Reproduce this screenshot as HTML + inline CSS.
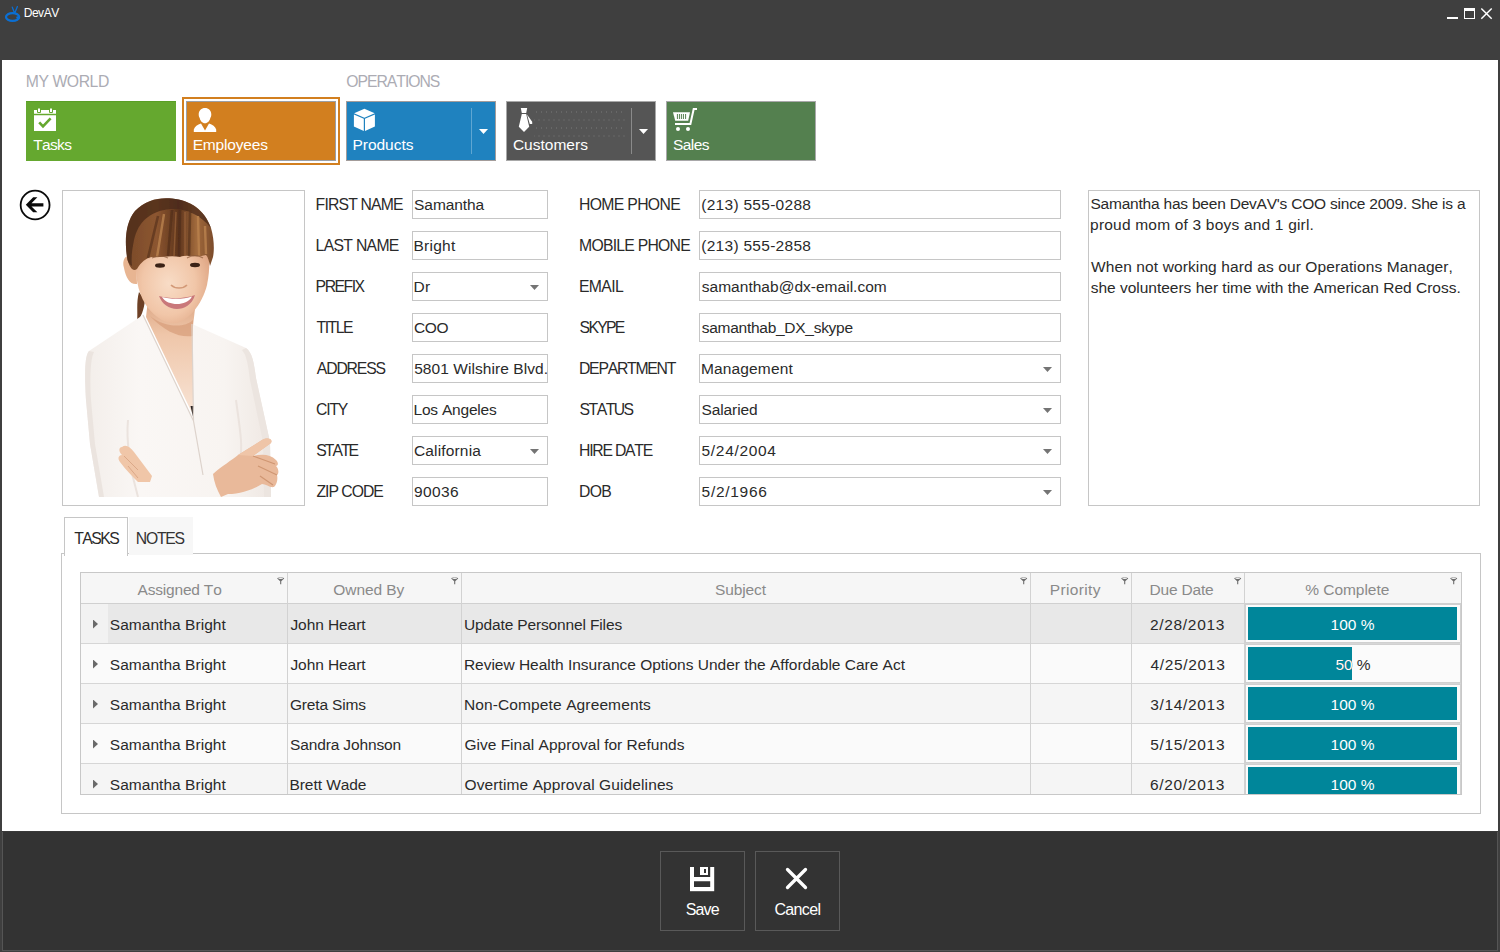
<!DOCTYPE html>
<html lang="en">
<head>
<meta charset="utf-8">
<title>DevAV</title>
<style>
*{box-sizing:border-box;margin:0;padding:0}
html,body{width:1500px;height:952px;overflow:hidden;background:#3f3f3f}
body{position:relative;font-family:"Liberation Sans",sans-serif;font-size:15.5px;color:#2a2a2a;font-kerning:none}
.a{position:absolute}
.t{position:absolute;white-space:nowrap;line-height:20px;height:20px}
#content{left:2px;top:60px;width:1496px;height:771px;background:#fff}
#bt{left:2px;top:831px;width:1496px;height:1px;background:#393939}
#bottom{left:2px;top:832px;width:1496px;height:119px;background:#333;border:1px solid #555;border-top:none}
.tile{position:absolute;top:101px;width:150px;height:60px}
.tile svg{position:absolute}
.box{position:absolute;height:29px;border:1px solid #c6c6c6;background:#fff}
.dd{position:absolute;width:9px;height:5px;background:#747474;clip-path:polygon(0 0,100% 0,50% 100%)}
.ddw{position:absolute;width:9px;height:5px;background:#fff;clip-path:polygon(0 0,100% 0,50% 100%)}
.ex{position:absolute;width:5px;height:9px;background:#6a6a6a;clip-path:polygon(0 0,100% 50%,0 100%)}
.vl{position:absolute;top:573px;width:1px;height:221px;background:#d2d2d2}
</style>
</head>
<body>
<div class="a" id="content"></div>
<div class="a" id="bottom"></div><div class="a" id="bt"></div>
<div class="t" style="left:23.72px;top:2.9px;letter-spacing:-0.470px;font-size:12px;color:#fff">DevAV</div>
<svg class="a" style="left:4px;top:4px" width="18" height="20" viewBox="0 0 18 20"><g fill="none" stroke="#0b6fd3" stroke-linecap="round"><ellipse cx="8.6" cy="13" rx="6.6" ry="3.9" stroke-width="2.3"/><path d="M8.3 3.2 10.3 8.4M13.4 2.6 11 8.6" stroke-width="1.3"/></g><circle cx="13.6" cy="13.6" r="1.3" fill="#0b6fd3"/></svg>
<div class="a" style="left:1447px;top:16.500px;width:11px;height:2.500px;background:#fff"></div>
<div class="a" style="left:1464px;top:8px;width:11px;height:11px;border:1px solid #fff;border-top-width:3px"></div>
<svg class="a" style="left:1480px;top:7px" width="13" height="13" viewBox="0 0 13 13"><path d="M1.3 1.5 11.7 11.7M11.7 1.5 1.3 11.7" stroke="#fff" stroke-width="1.5" fill="none"/></svg>
<div class="t" style="left:25.81px;top:71.5px;letter-spacing:-0.453px;font-size:15.75px;color:#acacb4">MY WORLD</div>
<div class="t" style="left:346.35px;top:71.5px;letter-spacing:-1.027px;font-size:15.75px;color:#acacb4">OPERATIONS</div>
<div class="tile" style="left:26px;background:#65a82f;border-top:1px solid #5a9f26">
<svg width="24" height="26" viewBox="0 0 24 26" style="left:8px;top:5px"><path fill="#fff" d="M0 3h22v3.8H0zM0 8.2h22V24H0z"/><path fill="#fff" stroke="#65a82f" stroke-width="1" d="M3.5 1h3v4.500h-3zM15.5 1h3v4.500h-3z"/><path d="M5.2 15.4 9 19.4 16.6 11.4" fill="none" stroke="#65a82f" stroke-width="2.600"/></svg></div>
<div class="t" style="left:33.25px;top:134.6px;letter-spacing:-0.668px;color:#fff">Tasks</div>
<div class="a" style="left:182px;top:97px;width:158px;height:68px;border:2px solid #d27f1f;background:#fff"></div>
<div class="tile" style="left:186px;background:#d27f1f;border:1px solid #9c9fa4">
<svg width="24" height="26" viewBox="0 0 24 26" style="left:6px;top:5px"><path fill="#fff" d="M12 1c3.6 0 6.3 2.6 6.3 6.4 0 1.500-.4 2.700-1 3.500-.5 2.700-2.600 5.300-5.300 5.300s-4.800-2.600-5.300-5.300c-.6-.8-1-2-1-3.500C5.700 3.600 8.400 1 12 1z"/><path fill="#fff" d="M8 16.600 12 23.600 16 16.600C19.500 17.600 22.300 19.600 23.200 22.500V25H.8v-2.500C1.700 19.600 4.500 17.600 8 16.600z"/></svg></div>
<div class="t" style="left:192.73px;top:134.6px;letter-spacing:-0.186px;color:#fff">Employees</div>
<div class="tile" style="left:346px;background:#1f82bf;border:1px solid #a39c9a">
<svg width="24" height="26" viewBox="0 0 24 26" style="left:6px;top:5px"><path fill="#fff" d="M11.400 1.700 21.700 6.300 11.400 10.700 1.100 6.300zM.9 7.600 10.800 11.800V24L.9 19.600zM21.900 7.600 12 11.800V24l9.900-4.400z"/></svg>
<div class="a" style="left:124px;top:6px;width:1px;height:46px;background:#5fa6d2"></div><i class="ddw" style="left:132px;top:27px"></i></div>
<div class="t" style="left:352.43px;top:134.6px;letter-spacing:-0.021px;color:#fff">Products</div>
<div class="tile" style="left:506px;background:#555;border:1px solid #a8a8a8"><div class="a" style="left:27px;top:7px;width:92px;height:34px;background-image:radial-gradient(circle,#676767 0.5px,transparent 0.8px),radial-gradient(circle,#676767 0.5px,transparent 0.8px);background-size:5px 16px,5px 16px;background-position:0 -5px,2.5px 3px"></div>
<svg width="24" height="26" viewBox="0 0 24 26" style="left:6px;top:5px"><path fill="#fff" d="M7.800 1h6.400L13.200 6H8.800zM8.800 7h4.400L16.200 19.800 11 25 5.800 19.800zM14 7.400 19.200 14.800V17H16.800z"/></svg>
<div class="a" style="left:124px;top:6px;width:1px;height:46px;background:#8a8a8a"></div><i class="ddw" style="left:132px;top:27px"></i></div>
<div class="t" style="left:512.91px;top:134.6px;letter-spacing:0.007px;color:#fff">Customers</div>
<div class="tile" style="left:666px;background:#54804f;border:1px solid #a9a8aa">
<svg width="26" height="26" viewBox="0 0 26 26" style="left:6px;top:5px"><path fill="#fff" d="M0 5.200h17L15.200 13.800H2.200z"/><path d="M4.400 7v5M6.400 7v5M8.400 7v5M10.400 7v5M12.600 7v5" stroke="#54804f" stroke-width="1"/><path d="M24 2H20.700L17.400 17H2" fill="none" stroke="#fff" stroke-width="2"/><circle cx="5" cy="22" r="2" fill="#fff"/><circle cx="15" cy="22" r="2" fill="#fff"/></svg></div>
<div class="t" style="left:673.00px;top:134.6px;letter-spacing:-0.555px;color:#fff">Sales</div>
<svg class="a" style="left:19px;top:189px" width="33" height="33" viewBox="0 0 33 33"><circle cx="16.100" cy="16" r="14.450" fill="none" stroke="#0a0a0a" stroke-width="1.800"/><path d="M6.800 15.850 14.200 8.300H18.400L12.500 14.300H24.400V17.400H12.500L18.400 23.300H14.200z" fill="#0a0a0a"/></svg>
<div class="a" id="photo" style="left:62px;top:190px;width:243px;height:316px;border:1px solid #c6c6c6;background:#fff">
<svg class="a" style="left:0;top:0" width="241" height="314" viewBox="63 191 241 314">
<defs>
<linearGradient id="hg" x1="0" y1="0" x2="1" y2="0"><stop offset="0" stop-color="#7a4a2a"/><stop offset=".35" stop-color="#8c5630"/><stop offset=".6" stop-color="#5e351d"/><stop offset=".8" stop-color="#a16a3c"/><stop offset="1" stop-color="#7b4b2b"/></linearGradient>
<linearGradient id="sk" x1="0" y1="0" x2="1" y2="0"><stop offset="0" stop-color="#f0c4a4"/><stop offset=".55" stop-color="#f4cdb0"/><stop offset="1" stop-color="#e2a986"/></linearGradient>
<linearGradient id="jk" x1="0" y1="0" x2="1" y2="0"><stop offset="0" stop-color="#f3eeea"/><stop offset=".3" stop-color="#faf7f5"/><stop offset=".75" stop-color="#f8f4f1"/><stop offset="1" stop-color="#efe8e3"/></linearGradient>
<linearGradient id="ch" x1="0" y1="0" x2="0" y2="1"><stop offset="0" stop-color="#dca684"/><stop offset=".3" stop-color="#efc6a9"/><stop offset="1" stop-color="#f8e4d6"/></linearGradient><radialGradient id="fc" cx=".45" cy=".55" r=".6"><stop offset="0" stop-color="#f8dcc6"/><stop offset=".6" stop-color="#f1c6a8"/><stop offset="1" stop-color="#dfa684"/></radialGradient>
<filter id="bl" x="-5%" y="-5%" width="110%" height="110%"><feGaussianBlur stdDeviation=".7"/></filter>
</defs>
<g filter="url(#bl)">
<!-- ponytail -->
<path d="M139 292C136 303 138 312 137 322 141 317 144 310 145 300z" fill="#6d4125"/>
<!-- jacket -->
<path d="M143 315 89 351C84 356 85 380 86 400L90 444 99 497H271L270 442 256 378C254 362 252 352 246 348L192 324 193 421z" fill="url(#jk)"/>
<path d="M89 351C84 356 85 380 86 400L90 444 99 497H104L95 444 91 400C90 380 90 360 94 352z" fill="#ebe4df"/>
<path d="M246 348C252 352 254 362 256 378L270 442 271 497H264L263 442 250 380C248 365 247 356 242 350z" fill="#ece5e0"/>
<path d="M128 420C126 440 130 470 138 497M236 400C240 430 243 445 240 460" stroke="#ebe3de" stroke-width="2" fill="none"/>
<!-- neck & chest -->
<path d="M148 300 146 317 193 415 193 326 196 300z" fill="url(#ch)"/>
<path d="M150 316C165 328 185 328 193 320L193 336C180 338 165 332 150 316z" fill="#d89f7c" opacity=".75"/>
<path d="M190.500 406h3.500v15z" fill="#2a2422"/>
<!-- lapel lines -->
<path d="M143 315 193.500 421 203 475M192 324 193.500 421" stroke="#ddd3cc" stroke-width="1.200" fill="none"/>
<!-- ear -->
<path d="M136 257C128 252 121 258 124 268 126 278 130 285 137 284z" fill="#e8b592"/>
<!-- face -->
<path d="M136 250C134 275 138 295 148 308 158 320 168 324 176 323 188 321 202 305 207 285 210 270 210 255 208 245L170 235z" fill="url(#fc)"/>
<!-- hair -->
<path d="M127.500 260C124 240 126 222 135 211 145 200 160 197 172 198.500 190 200 205 210 211 228 214 238 214.500 250 213 257L210 266C209 261 208 257 206 255 196 258 188 254 180 257 170 255 160 258 152 257 146 258 141 262 137 269 133 272 130 268 127.500 260z" fill="url(#hg)"/>
<path d="M127.500 260C124 240 126 222 135 211 145 200 160 197 172 198.500 190 200 205 210 211 228 200 214 185 208 170 209 150 211 138 222 134 240 132 250 131 258 132 266 130 265 128.500 263 127.500 260z" fill="#4a2a19" opacity=".75"/>
<path d="M172 210 168 256M180 210 179 256M158 216 148 258M190 212 189 256" stroke="#4a2917" stroke-width="2.600" opacity=".55" fill="none"/>
<path d="M198 216 199 256M205 226 206 254M164 214 157 257" stroke="#bd8650" stroke-width="2.400" opacity=".75" fill="none"/>
<path d="M176 212 174 256M185 212 185 256" stroke="#9a6438" stroke-width="1.500" opacity=".7" fill="none"/>
<!-- eyes, brows -->
<ellipse cx="160" cy="265.500" rx="5" ry="2.200" fill="#3a2418"/>
<ellipse cx="195" cy="265" rx="5" ry="2.200" fill="#3a2418"/>
<path d="M152 258C158 255 164 256 168 258M187 258C192 255 198 255 203 258" stroke="#8a5a3a" stroke-width="1.200" fill="none" opacity=".7"/>
<!-- nose -->
<path d="M171 285C175 289 183 289 187 285" stroke="#d39a78" stroke-width="1.600" fill="none"/>
<!-- mouth -->
<path d="M159 296C170 299 184 299 195 295 192 305 184 309 177 309 169 309 162 304 159 296z" fill="#c9787a"/>
<path d="M162 297C170 299.500 184 299.500 192 296.500 189 302 183 304 177 304 171 304 165 302 162 297z" fill="#fff"/>
<!-- hands -->
<path d="M213 474C222 466 232 460 238 455L262 440C268 437 273 439 271 443L253 456C262 454 270 454 276 460 279 463 278 466 276 466 279 469 279 474 277 475 278 479 277 484 274 487 270 488 266 484 262 484 252 490 240 494 228 494L221 497C217 490 214 482 213 474z" fill="#e9b99a"/>
<path d="M253 456 275 464M258 466 277 475M260 476 273 485" stroke="#cf9672" stroke-width="1.200" fill="none"/>
<path d="M238 455 262 440C268 437 273 439 271 443L253 456z" fill="#efc5a8"/>
<path d="M122 447C126 444 130 447 134 452L152 476 150 482 138 482C132 476 126 470 120 462 117 458 119 455 122 455 118 451 119 447 122 447z" fill="#f0c6a8"/>
<path d="M124 456 138 470M128 466 138 478" stroke="#dba888" stroke-width="1" fill="none"/>
</g>
<rect x="63" y="497.500" width="241" height="8" fill="#fff"/>
</svg>

</div>
<div class="t" style="left:315.61px;top:194.5px;letter-spacing:-0.838px;font-size:15.75px">FIRST NAME</div>
<div class="box" style="left:412px;top:190px;width:136px"></div>
<div class="t" style="left:414.10px;top:194.6px;letter-spacing:-0.082px">Samantha</div>
<div class="t" style="left:579.01px;top:194.5px;letter-spacing:-0.664px;font-size:15.75px">HOME PHONE</div>
<div class="box" style="left:699px;top:190px;width:362px"></div>
<div class="t" style="left:701.24px;top:194.6px;letter-spacing:0.286px">(213) 555-0288</div>
<div class="t" style="left:315.61px;top:235.5px;letter-spacing:-0.697px;font-size:15.75px">LAST NAME</div>
<div class="box" style="left:412px;top:231px;width:136px"></div>
<div class="t" style="left:413.53px;top:235.6px;letter-spacing:0.252px">Bright</div>
<div class="t" style="left:579.01px;top:235.5px;letter-spacing:-0.742px;font-size:15.75px">MOBILE PHONE</div>
<div class="box" style="left:699px;top:231px;width:362px"></div>
<div class="t" style="left:701.24px;top:235.6px;letter-spacing:0.286px">(213) 555-2858</div>
<div class="t" style="left:315.61px;top:276.5px;letter-spacing:-1.481px;font-size:15.75px">PREFIX</div>
<div class="box" style="left:412px;top:272px;width:136px"></div>
<div class="t" style="left:413.53px;top:276.6px;letter-spacing:0.322px">Dr</div>
<i class="dd" style="left:530px;top:285px"></i>
<div class="t" style="left:579.01px;top:276.5px;letter-spacing:-0.653px;font-size:15.75px">EMAIL</div>
<div class="box" style="left:699px;top:272px;width:362px"></div>
<div class="t" style="left:701.77px;top:276.6px;letter-spacing:0.019px">samanthab@dx-email.com</div>
<div class="t" style="left:316.55px;top:317.5px;letter-spacing:-1.476px;font-size:15.75px">TITLE</div>
<div class="box" style="left:412px;top:313px;width:136px"></div>
<div class="t" style="left:414.01px;top:317.6px;letter-spacing:-0.435px">COO</div>
<div class="t" style="left:579.58px;top:317.5px;letter-spacing:-1.705px;font-size:15.75px">SKYPE</div>
<div class="box" style="left:699px;top:313px;width:362px"></div>
<div class="t" style="left:701.77px;top:317.6px;letter-spacing:-0.275px">samanthab_DX_skype</div>
<div class="t" style="left:316.87px;top:358.5px;letter-spacing:-1.163px;font-size:15.75px">ADDRESS</div>
<div class="box" style="left:412px;top:354px;width:136px"></div>
<div class="t" style="left:414.18px;top:358.6px;letter-spacing:0.070px;max-width:133px;overflow:hidden">5801 Wilshire Blvd.</div>
<div class="t" style="left:579.01px;top:358.5px;letter-spacing:-1.250px;font-size:15.75px">DEPARTMENT</div>
<div class="box" style="left:699px;top:354px;width:362px"></div>
<div class="t" style="left:700.93px;top:358.6px;letter-spacing:0.153px">Management</div>
<i class="dd" style="left:1043px;top:367px"></i>
<div class="t" style="left:316.10px;top:399.5px;letter-spacing:-1.219px;font-size:15.75px">CITY</div>
<div class="box" style="left:412px;top:395px;width:136px"></div>
<div class="t" style="left:413.53px;top:399.6px;letter-spacing:-0.210px">Los Angeles</div>
<div class="t" style="left:579.58px;top:399.5px;letter-spacing:-1.522px;font-size:15.75px">STATUS</div>
<div class="box" style="left:699px;top:395px;width:362px"></div>
<div class="t" style="left:701.50px;top:399.6px;letter-spacing:-0.109px">Salaried</div>
<i class="dd" style="left:1043px;top:408px"></i>
<div class="t" style="left:316.18px;top:440.5px;letter-spacing:-1.951px;font-size:15.75px">STATE</div>
<div class="box" style="left:412px;top:436px;width:136px"></div>
<div class="t" style="left:414.01px;top:440.6px;letter-spacing:0.153px">California</div>
<i class="dd" style="left:530px;top:449px"></i>
<div class="t" style="left:579.01px;top:440.5px;letter-spacing:-1.223px;font-size:15.75px">HIRE DATE</div>
<div class="box" style="left:699px;top:436px;width:362px"></div>
<div class="t" style="left:701.58px;top:440.6px;letter-spacing:0.672px">5/24/2004</div>
<i class="dd" style="left:1043px;top:449px"></i>
<div class="t" style="left:316.40px;top:481.5px;letter-spacing:-0.985px;font-size:15.75px">ZIP CODE</div>
<div class="box" style="left:412px;top:477px;width:136px"></div>
<div class="t" style="left:414.07px;top:481.6px;letter-spacing:0.380px">90036</div>
<div class="t" style="left:579.01px;top:481.5px;letter-spacing:-0.710px;font-size:15.75px">DOB</div>
<div class="box" style="left:699px;top:477px;width:362px"></div>
<div class="t" style="left:701.58px;top:481.6px;letter-spacing:0.708px">5/2/1966</div>
<i class="dd" style="left:1043px;top:490px"></i>
<div class="a" id="notes" style="left:1088px;top:190px;width:392px;height:316px;border:1px solid #c6c6c6;background:#fff"></div>
<div class="t" style="left:1090.40px;top:193.6px;letter-spacing:-0.210px">Samantha has been DevAV's COO since 2009. She is a</div>
<div class="t" style="left:1090.10px;top:214.6px;letter-spacing:0.194px">proud mom of 3 boys and 1 girl.</div>
<div class="t" style="left:1091.03px;top:256.6px;letter-spacing:0.111px">When not working hard as our Operations Manager,</div>
<div class="t" style="left:1090.67px;top:277.6px;letter-spacing:-0.008px">she volunteers her time with the American Red Cross.</div>
<div class="a" style="left:61px;top:553px;width:1420px;height:261px;border:1px solid #c6c6c6;background:#fff"></div>
<div class="a" style="left:129px;top:517px;width:64px;height:38px;background:#f7f7f7"></div>
<div class="a" style="left:64px;top:517px;width:64px;height:39px;border:1px solid #c6c6c6;border-bottom:none;background:#fff"></div>
<div class="t" style="left:74.25px;top:528.5px;letter-spacing:-1.528px;font-size:15.75px">TASKS</div>
<div class="t" style="left:135.81px;top:528.5px;letter-spacing:-1.251px;font-size:15.75px;color:#333">NOTES</div>
<div class="a" id="grid" style="left:80px;top:572px;width:1382px;height:223px;border:1px solid #c8c8c8;background:#fafafa"></div>
<div class="a" style="left:81px;top:573px;width:1380px;height:31px;background:#f6f6f6;border-bottom:1px solid #d0d0d0"></div>
<div class="a" style="left:81px;top:604px;width:1380px;height:190px;overflow:hidden">
<div class="a" style="left:0;top:0px;width:1380px;height:40px;background:#e8e8e8;border-bottom:1px solid #d6d6d6"></div>
<div class="a" style="left:0;top:0px;width:27px;height:39px;background:#f2f2f2"></div>
<i class="ex" style="left:12px;top:15.5px"></i>
<div class="a" style="left:1164px;top:0px;width:216px;height:39px;border:1px solid #d0d0d0;background:#fbfbfb"></div>
<div class="a" style="left:1167px;top:3px;width:209px;height:33px;background:#00869a"></div>
<div class="a" style="left:0;top:40px;width:1380px;height:40px;background:#fafafa;border-bottom:1px solid #d6d6d6"></div>
<i class="ex" style="left:12px;top:55.5px"></i>
<div class="a" style="left:1164px;top:40px;width:216px;height:39px;border:1px solid #d0d0d0;background:#fbfbfb"></div>
<div class="a" style="left:1167px;top:43px;width:104px;height:33px;background:#00869a"></div>
<div class="a" style="left:0;top:80px;width:1380px;height:40px;background:#f5f5f5;border-bottom:1px solid #d6d6d6"></div>
<i class="ex" style="left:12px;top:95.5px"></i>
<div class="a" style="left:1164px;top:80px;width:216px;height:39px;border:1px solid #d0d0d0;background:#fbfbfb"></div>
<div class="a" style="left:1167px;top:83px;width:209px;height:33px;background:#00869a"></div>
<div class="a" style="left:0;top:120px;width:1380px;height:40px;background:#fafafa;border-bottom:1px solid #d6d6d6"></div>
<i class="ex" style="left:12px;top:135.5px"></i>
<div class="a" style="left:1164px;top:120px;width:216px;height:39px;border:1px solid #d0d0d0;background:#fbfbfb"></div>
<div class="a" style="left:1167px;top:123px;width:209px;height:33px;background:#00869a"></div>
<div class="a" style="left:0;top:160px;width:1380px;height:40px;background:#f5f5f5;border-bottom:1px solid #d6d6d6"></div>
<i class="ex" style="left:12px;top:175.5px"></i>
<div class="a" style="left:1164px;top:160px;width:216px;height:39px;border:1px solid #d0d0d0;background:#fbfbfb"></div>
<div class="a" style="left:1167px;top:163px;width:209px;height:33px;background:#00869a"></div>
</div>
<div class="a" style="left:0;top:604px;width:1500px;height:190px;overflow:hidden">
<div class="t" style="left:109.80px;top:10.6px;letter-spacing:0.036px">Samantha Bright</div>
<div class="t" style="left:290.46px;top:10.6px;letter-spacing:-0.082px">John Heart</div>
<div class="t" style="left:464.00px;top:10.6px;letter-spacing:-0.142px">Update Personnel Files</div>
<div class="t" style="left:1150.02px;top:10.6px;letter-spacing:0.672px">2/28/2013</div>
<div class="t" style="left:1330.62px;top:10.6px;letter-spacing:0.010px;color:#fff">100 %</div>
<div class="t" style="left:109.80px;top:50.6px;letter-spacing:0.036px">Samantha Bright</div>
<div class="t" style="left:290.46px;top:50.6px;letter-spacing:-0.082px">John Heart</div>
<div class="t" style="left:463.93px;top:50.6px;letter-spacing:-0.016px">Review Health Insurance Options Under the Affordable Care Act</div>
<div class="t" style="left:1150.44px;top:50.6px;letter-spacing:0.672px">4/25/2013</div>
<div class="t" style="left:1335.48px;top:50.6px;letter-spacing:-0.082px">50 %</div>
<div class="a" style="left:1248px;top:40px;width:104px;height:40px;overflow:hidden"><div class="a" style="left:-1248px;top:-40px;width:1500px;height:200px"><div class="t" style="left:1335.48px;top:50.6px;letter-spacing:-0.082px;color:#fff">50 %</div></div></div>
<div class="t" style="left:109.80px;top:90.6px;letter-spacing:0.036px">Samantha Bright</div>
<div class="t" style="left:289.92px;top:90.6px;letter-spacing:-0.152px">Greta Sims</div>
<div class="t" style="left:463.93px;top:90.6px;letter-spacing:0.120px">Non-Compete Agreements</div>
<div class="t" style="left:1150.21px;top:90.6px;letter-spacing:0.672px">3/14/2013</div>
<div class="t" style="left:1330.62px;top:90.6px;letter-spacing:0.010px;color:#fff">100 %</div>
<div class="t" style="left:109.80px;top:130.6px;letter-spacing:0.036px">Samantha Bright</div>
<div class="t" style="left:290.00px;top:130.6px;letter-spacing:-0.135px">Sandra Johnson</div>
<div class="t" style="left:464.42px;top:130.6px;letter-spacing:0.010px">Give Final Approval for Refunds</div>
<div class="t" style="left:1150.18px;top:130.6px;letter-spacing:0.672px">5/15/2013</div>
<div class="t" style="left:1330.62px;top:130.6px;letter-spacing:0.010px;color:#fff">100 %</div>
<div class="t" style="left:109.80px;top:170.6px;letter-spacing:0.036px">Samantha Bright</div>
<div class="t" style="left:289.43px;top:170.6px;letter-spacing:-0.053px">Brett Wade</div>
<div class="t" style="left:464.47px;top:170.6px;letter-spacing:0.111px">Overtime Approval Guidelines</div>
<div class="t" style="left:1150.01px;top:170.6px;letter-spacing:0.672px">6/20/2013</div>
<div class="t" style="left:1330.62px;top:170.6px;letter-spacing:0.010px;color:#fff">100 %</div>
</div>
<div class="vl" style="left:287px"></div>
<div class="vl" style="left:461px"></div>
<div class="vl" style="left:1030px"></div>
<div class="vl" style="left:1131px"></div>
<div class="vl" style="left:1244px"></div>
<div class="t" style="left:137.57px;top:580.4px;letter-spacing:-0.196px;color:#8a8a8a">Assigned To</div>
<div class="t" style="left:333.27px;top:580.4px;letter-spacing:-0.063px;color:#8a8a8a">Owned By</div>
<div class="t" style="left:714.90px;top:580.4px;letter-spacing:-0.100px;color:#8a8a8a">Subject</div>
<div class="t" style="left:1049.83px;top:580.4px;letter-spacing:0.347px;color:#8a8a8a">Priority</div>
<div class="t" style="left:1149.53px;top:580.4px;letter-spacing:-0.185px;color:#8a8a8a">Due Date</div>
<div class="t" style="left:1305.25px;top:580.4px;letter-spacing:-0.043px;color:#8a8a8a">% Complete</div>
<svg class="a" style="left:277px;top:577px" width="8" height="8" viewBox="0 0 8 8"><path d="M.2 1.500C.2.100 7.200.100 7.200 1.500L4.250 4.300V7.200H3.150V4.300z" fill="#6e6e6e"/><ellipse cx="3.700" cy="1.350" rx="2.500" ry=".6" fill="#f6f6f6"/></svg>
<svg class="a" style="left:451px;top:577px" width="8" height="8" viewBox="0 0 8 8"><path d="M.2 1.500C.2.100 7.200.100 7.200 1.500L4.250 4.300V7.200H3.150V4.300z" fill="#6e6e6e"/><ellipse cx="3.700" cy="1.350" rx="2.500" ry=".6" fill="#f6f6f6"/></svg>
<svg class="a" style="left:1020px;top:577px" width="8" height="8" viewBox="0 0 8 8"><path d="M.2 1.500C.2.100 7.200.100 7.200 1.500L4.250 4.300V7.200H3.150V4.300z" fill="#6e6e6e"/><ellipse cx="3.700" cy="1.350" rx="2.500" ry=".6" fill="#f6f6f6"/></svg>
<svg class="a" style="left:1121px;top:577px" width="8" height="8" viewBox="0 0 8 8"><path d="M.2 1.500C.2.100 7.200.100 7.200 1.500L4.250 4.300V7.200H3.150V4.300z" fill="#6e6e6e"/><ellipse cx="3.700" cy="1.350" rx="2.500" ry=".6" fill="#f6f6f6"/></svg>
<svg class="a" style="left:1234px;top:577px" width="8" height="8" viewBox="0 0 8 8"><path d="M.2 1.500C.2.100 7.200.100 7.200 1.500L4.250 4.300V7.200H3.150V4.300z" fill="#6e6e6e"/><ellipse cx="3.700" cy="1.350" rx="2.500" ry=".6" fill="#f6f6f6"/></svg>
<svg class="a" style="left:1450px;top:577px" width="8" height="8" viewBox="0 0 8 8"><path d="M.2 1.500C.2.100 7.200.100 7.200 1.500L4.250 4.300V7.200H3.150V4.300z" fill="#6e6e6e"/><ellipse cx="3.700" cy="1.350" rx="2.500" ry=".6" fill="#f6f6f6"/></svg>
<div class="a" style="left:660px;top:851px;width:85px;height:80px;border:1px solid #595959"></div>
<div class="a" style="left:755px;top:851px;width:85px;height:80px;border:1px solid #595959"></div>
<svg class="a" style="left:690px;top:867px" width="25" height="25" viewBox="0 0 25 25"><path fill="#fff" d="M0 0h24.200v24.200H0z"/><path fill="#333" d="M4 0h16.200v10H4zM4 14.300h16.200v5.700H4z"/><path fill="#fff" d="M10 0h8v8h-8z"/><path fill="#333" d="M14 2h2v4h-2z"/></svg>
<svg class="a" style="left:785px;top:867px" width="24" height="24" viewBox="0 0 24 24"><path d="M2.500 2.500 20.500 20.500M20.500 2.500 2.500 20.500" stroke="#fff" stroke-width="3.300" stroke-linecap="round" fill="none"/></svg>
<div class="t" style="left:685.77px;top:900.0px;letter-spacing:-0.867px;font-size:16px;color:#fff">Save</div>
<div class="t" style="left:774.39px;top:900.0px;letter-spacing:-0.634px;font-size:16px;color:#fff">Cancel</div>
</body>
</html>
